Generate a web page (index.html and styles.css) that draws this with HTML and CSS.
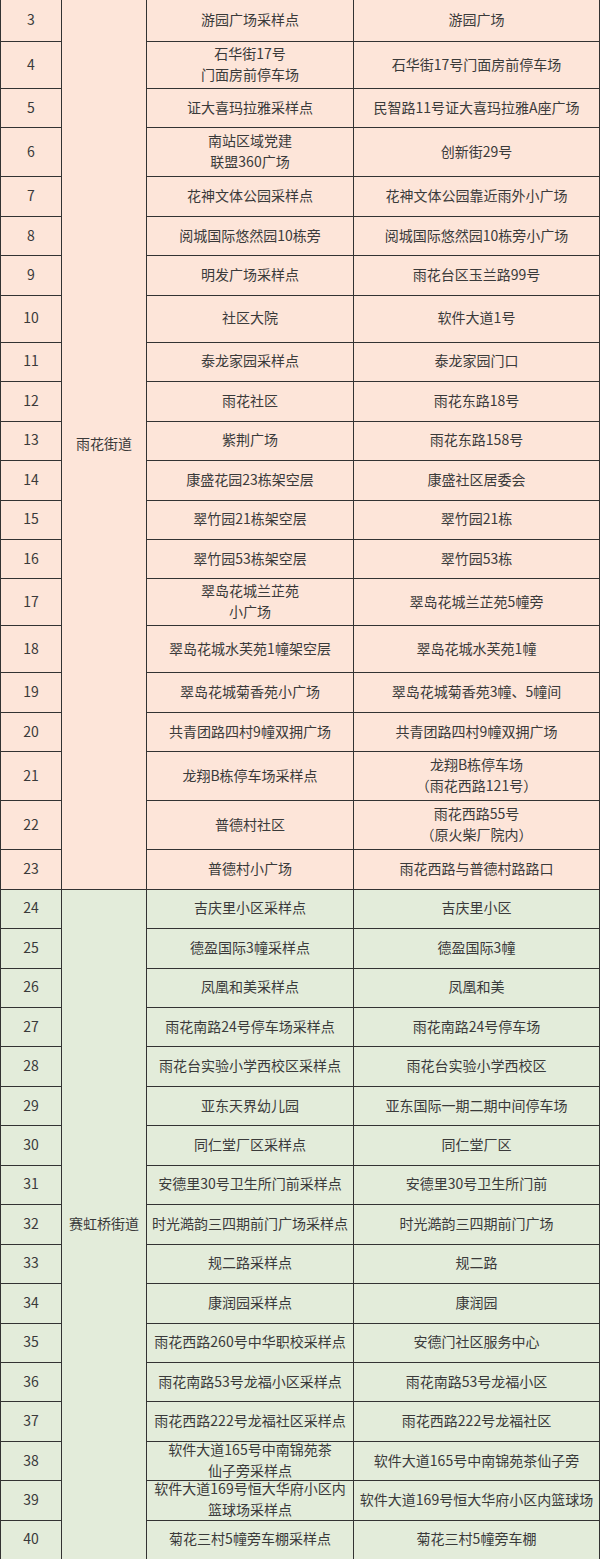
FILE: index.html
```html
<!DOCTYPE html>
<html lang="zh-CN">
<head>
<meta charset="utf-8">
<title>采样点</title>
<link rel="stylesheet" href="styles.css">
</head>
<body>
<table class="tbl">
<colgroup><col class="c1"><col class="c2"><col class="c3"><col class="c4"></colgroup>
<tbody class="pink">
<tr class="first"><td>3</td><td rowspan="21" class="street">雨花街道</td><td>游园广场采样点</td><td>游园广场</td></tr>
<tr class="h47"><td>4</td><td>石华街17号<br>门面房前停车场</td><td>石华街17号门面房前停车场</td></tr>
<tr><td>5</td><td>证大喜玛拉雅采样点</td><td>民智路11号证大喜玛拉雅A座广场</td></tr>
<tr class="h49"><td>6</td><td>南站区域党建<br>联盟360广场</td><td>创新街29号</td></tr>
<tr><td>7</td><td>花神文体公园采样点</td><td>花神文体公园靠近雨外小广场</td></tr>
<tr><td>8</td><td>阅城国际悠然园10栋旁</td><td>阅城国际悠然园10栋旁小广场</td></tr>
<tr><td>9</td><td>明发广场采样点</td><td>雨花台区玉兰路99号</td></tr>
<tr class="h47"><td>10</td><td>社区大院</td><td>软件大道1号</td></tr>
<tr><td>11</td><td>泰龙家园采样点</td><td>泰龙家园门口</td></tr>
<tr><td>12</td><td>雨花社区</td><td>雨花东路18号</td></tr>
<tr><td>13</td><td>紫荆广场</td><td>雨花东路158号</td></tr>
<tr><td>14</td><td>康盛花园23栋架空层</td><td>康盛社区居委会</td></tr>
<tr><td>15</td><td>翠竹园21栋架空层</td><td>翠竹园21栋</td></tr>
<tr><td>16</td><td>翠竹园53栋架空层</td><td>翠竹园53栋</td></tr>
<tr class="h47"><td>17</td><td>翠岛花城兰芷苑<br>小广场</td><td>翠岛花城兰芷苑5幢旁</td></tr>
<tr class="h47"><td>18</td><td>翠岛花城水芙苑1幢架空层</td><td>翠岛花城水芙苑1幢</td></tr>
<tr><td>19</td><td>翠岛花城菊香苑小广场</td><td>翠岛花城菊香苑3幢、5幢间</td></tr>
<tr><td>20</td><td>共青团路四村9幢双拥广场</td><td>共青团路四村9幢双拥广场</td></tr>
<tr class="h49"><td>21</td><td>龙翔B栋停车场采样点</td><td>龙翔B栋停车场<br>（雨花西路121号）</td></tr>
<tr class="h49"><td>22</td><td>普德村社区</td><td>雨花西路55号<br>（原火柴厂院内）</td></tr>
<tr><td>23</td><td>普德村小广场</td><td>雨花西路与普德村路路口</td></tr>
</tbody>
<tbody class="green">
<tr><td>24</td><td rowspan="17" class="street">赛虹桥街道</td><td>吉庆里小区采样点</td><td>吉庆里小区</td></tr>
<tr><td>25</td><td>德盈国际3幢采样点</td><td>德盈国际3幢</td></tr>
<tr><td>26</td><td>凤凰和美采样点</td><td>凤凰和美</td></tr>
<tr><td>27</td><td>雨花南路24号停车场采样点</td><td>雨花南路24号停车场</td></tr>
<tr><td>28</td><td>雨花台实验小学西校区采样点</td><td>雨花台实验小学西校区</td></tr>
<tr><td>29</td><td>亚东天界幼儿园</td><td>亚东国际一期二期中间停车场</td></tr>
<tr><td>30</td><td>同仁堂厂区采样点</td><td>同仁堂厂区</td></tr>
<tr><td>31</td><td>安德里30号卫生所门前采样点</td><td>安德里30号卫生所门前</td></tr>
<tr><td>32</td><td>时光澔韵三四期前门广场采样点</td><td>时光澔韵三四期前门广场</td></tr>
<tr><td>33</td><td>规二路采样点</td><td>规二路</td></tr>
<tr><td>34</td><td>康润园采样点</td><td>康润园</td></tr>
<tr><td>35</td><td>雨花西路260号中华职校采样点</td><td>安德门社区服务中心</td></tr>
<tr><td>36</td><td>雨花南路53号龙福小区采样点</td><td>雨花南路53号龙福小区</td></tr>
<tr><td>37</td><td>雨花西路222号龙福社区采样点</td><td>雨花西路222号龙福社区</td></tr>
<tr><td>38</td><td><div class="ov">软件大道165号中南锦苑茶<br>仙子旁采样点</div></td><td>软件大道165号中南锦苑茶仙子旁</td></tr>
<tr><td>39</td><td><div class="ov">软件大道169号恒大华府小区内<br>篮球场采样点</div></td><td>软件大道169号恒大华府小区内篮球场</td></tr>
<tr><td>40</td><td>菊花三村5幢旁车棚采样点</td><td>菊花三村5幢旁车棚</td></tr>
</tbody>
</table>
</body>
</html>
```

FILE: styles.css
```css
html, body {
  margin: 0;
  padding: 0;
  background: #ffffff;
}

.tbl {
  width: 599px;
  border-collapse: collapse;
  table-layout: fixed;
  font-family: "Noto Sans CJK SC", "Noto Sans", sans-serif;
  font-size: 14px;
  line-height: 21px;
  color: #3a3a3a;
  margin-top: -1px;
}

.c1 { width: 61px; }
.c2 { width: 85px; }
.c3 { width: 207px; }
.c4 { width: 246px; }

.tbl td {
  border: 1px solid #333333;
  padding: 0 0 2px 0;
  text-align: center;
  vertical-align: middle;
  white-space: nowrap;
  overflow: visible;
}

.pink td { background: #fde5d9; }
.green td { background: #e3ecda; }

.tbl tr { height: 39.45px; }
.tbl tr.first { height: 42px; }
.tbl tr.h47 { height: 47px; }
.tbl tr.h49 { height: 49px; }

.ov {
  height: 36px;
  display: flex;
  flex-direction: column;
  justify-content: center;
  align-items: center;
  line-height: 21px;
}
```
